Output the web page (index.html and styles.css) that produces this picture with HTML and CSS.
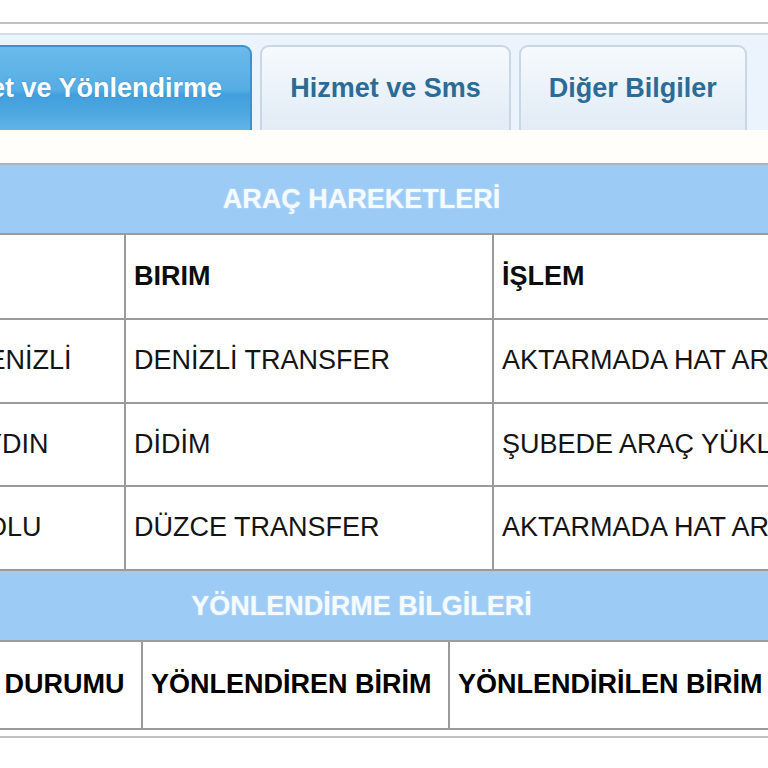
FILE: index.html
```html
<!DOCTYPE html>
<html lang="tr">
<head>
    <meta charset="UTF-8">
    <meta name="viewport" content="width=device-width, initial-scale=1.0">
    <title>Gönderi Takip</title>
    <link rel="stylesheet" href="styles.css">
</head>
<body>
    <div class="page">
        <div class="frame">
            <div class="tabs">
                <div class="tab active">Hareket ve Yönlendirme</div>
                <div class="tab">Hizmet ve Sms</div>
                <div class="tab">Diğer Bilgiler</div>
            </div>

            <div class="panel">
                <div class="section-title">ARAÇ HAREKETLERİ</div>
                <table class="grid moves">
                    <tr>
                        <th class="c-no">NO</th>
                        <th class="c-city">İL</th>
                        <th class="c-unit">BIRIM</th>
                        <th class="c-op">İŞLEM</th>
                    </tr>
                    <tr>
                        <td>1</td>
                        <td>DENİZLİ</td>
                        <td>DENİZLİ TRANSFER</td>
                        <td>AKTARMADA HAT ARACINA YÜKLENDİ</td>
                    </tr>
                    <tr>
                        <td>2</td>
                        <td>AYDIN</td>
                        <td>DİDİM</td>
                        <td>ŞUBEDE ARAÇ YÜKLEME</td>
                    </tr>
                    <tr>
                        <td>3</td>
                        <td>BOLU</td>
                        <td>DÜZCE TRANSFER</td>
                        <td>AKTARMADA HAT ARACINA YÜKLENDİ</td>
                    </tr>
                </table>

                <div class="section-title second">YÖNLENDİRME BİLGİLERİ</div>
                <table class="grid routes">
                    <tr>
                        <th class="c-no2">NO</th>
                        <th class="c-state">ONAY DURUMU</th>
                        <th class="c-from">YÖNLENDİREN BİRİM</th>
                        <th class="c-to">YÖNLENDİRİLEN BİRİM</th>
                    </tr>
                </table>
            </div>
        </div>
    </div>
</body>
</html>
```

FILE: styles.css
```css
* {
    margin: 0;
    padding: 0;
    box-sizing: border-box;
}

body {
    background: #ffffff;
    font-family: 'Liberation Sans', Arial, sans-serif;
    color: #111;
    overflow: hidden;
}

.page {
    width: 983px;
    margin: 22px 0 0 -130px;
}

.frame {
    border-top: 2px solid #c2c2c2;
    border-bottom: 2px solid #c2c2c2;
    padding: 9px 0 6px;
}

/* tabs */
.tabs {
    display: flex;
    gap: 8px;
    padding: 10px 0 0 15px;
    background: #ebf4fc;
    border-top: 2px solid #d3dde8;
}

.tab {
    height: 85px;
    padding: 0 28px;
    line-height: 82px;
    font-size: 27px;
    font-weight: bold;
    color: #2d6b97;
    white-space: nowrap;
    background: linear-gradient(#f6fafd 0%, #eaf2f9 55%, #e2ecf6 100%);
    border: 2px solid #c9d7e4;
    border-bottom: none;
    border-radius: 9px 9px 0 0;
}

.tab.active {
    color: #ffffff;
    background: linear-gradient(#6bbaea 0%, #55ade4 52%, #419fdc 58%, #4ea8e1 80%, #62b4e7 100%);
    border-color: #3b92d0;
    text-shadow: 0 0 2px rgba(20, 90, 150, 0.35);
}

/* panel */
.panel {
    padding-top: 33px;
    background: #fffefa;
}

.section-title {
    height: 72px;
    line-height: 68px;
    text-align: center;
    font-size: 27px;
    font-weight: bold;
    color: #f5faff;
    background: #9ccbf6;
    border-top: 2px solid #a8b6c4;
    border-bottom: 2px solid #9c9c9c;
    text-shadow: 0 0 2px rgba(255, 255, 255, 0.5);
}

.section-title.second {
    height: 71px;
    line-height: 70px;
    border-top: none;
}

/* tables */
.grid {
    width: 100%;
    table-layout: fixed;
    border-collapse: separate;
    border-spacing: 0;
    background: #ffffff;
    font-size: 27px;
}

.grid th,
.grid td {
    height: 83.5px;
    padding: 0 8px;
    text-align: left;
    vertical-align: middle;
    white-space: nowrap;
    overflow: hidden;
    border-right: 2px solid #9a9a9a;
    border-bottom: 2px solid #9a9a9a;
}

.grid th {
    height: 85px;
    font-weight: bold;
    color: #0d0d0d;
}

.grid td {
    font-weight: normal;
    color: #141414;
}

.routes th {
    height: 88px;
    color: #000;
}

.c-no { width: 90px; }
.c-city { width: 166px; }
.c-unit { width: 368px; }
.c-op { width: 359px; }

.c-no2 { width: 44px; }
.c-state { width: 229px; }
.c-from { width: 307px; }
.c-to { width: 403px; }
```
